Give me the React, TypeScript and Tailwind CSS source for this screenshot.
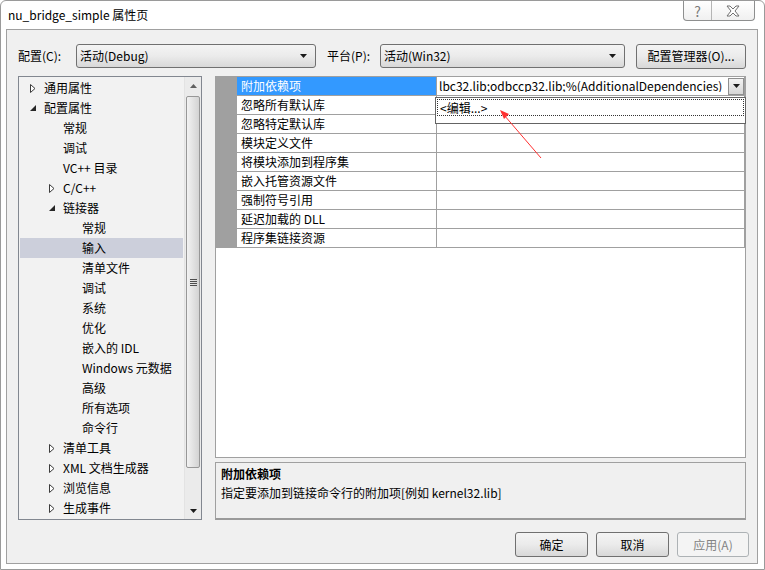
const tree = [
  { t: '通用属性', l: 0, a: 'c' },
  { t: '配置属性', l: 0, a: 'e' },
  { t: '常规', l: 1 },
  { t: '调试', l: 1 },
  { t: 'VC++ 目录', l: 1 },
  { t: 'C/C++', l: 1, a: 'c' },
  { t: '链接器', l: 1, a: 'e' },
  { t: '常规', l: 2 },
  { t: '输入', l: 2, sel: true },
  { t: '清单文件', l: 2 },
  { t: '调试', l: 2 },
  { t: '系统', l: 2 },
  { t: '优化', l: 2 },
  { t: '嵌入的 IDL', l: 2 },
  { t: 'Windows 元数据', l: 2 },
  { t: '高级', l: 2 },
  { t: '所有选项', l: 2 },
  { t: '命令行', l: 2 },
  { t: '清单工具', l: 1, a: 'c' },
  { t: 'XML 文档生成器', l: 1, a: 'c' },
  { t: '浏览信息', l: 1, a: 'c' },
  { t: '生成事件', l: 1, a: 'c' },
];

const pad = ['pl-[10px]', 'pl-[29px]', 'pl-[48px]'];

const props = [
  '附加依赖项',
  '忽略所有默认库',
  '忽略特定默认库',
  '模块定义文件',
  '将模块添加到程序集',
  '嵌入托管资源文件',
  '强制符号引用',
  '延迟加载的 DLL',
  '程序集链接资源',
];

function DownTri({ className = '' }: { className?: string }) {
  return (
    <svg width="7" height="4" viewBox="0 0 7 4" className={className}>
      <path d="M0 0 H7 L3.5 4 Z" fill="#1a1a1a" />
    </svg>
  );
}

function Arrow({ kind }: { kind?: string }) {
  if (kind === 'c')
    return (
      <svg width="6" height="9" viewBox="0 0 6 9">
        <path d="M0.5 0.5 L5 4.5 L0.5 8.5 Z" fill="#fff" stroke="#3c3c3c" strokeWidth="1" />
      </svg>
    );
  if (kind === 'e')
    return (
      <svg width="6" height="6" viewBox="0 0 6 6">
        <path d="M6 0 V6 H0 Z" fill="#262626" />
      </svg>
    );
  return null;
}

function Combo({ text, w }: { text: string; w: string }) {
  return (
    <div className={`${w} shrink-0 h-[24px] flex items-center justify-between pl-[3px] pr-[8px] border border-[#707070] rounded-[3px] bg-linear-to-b from-[#f4f4f4] via-[#ebebeb] to-[#d8d8d8]`}>
      <span>{text}</span>
      <DownTri />
    </div>
  );
}

function Btn({ label, w, disabled }: { label: string; w: string; disabled?: boolean }) {
  return (
    <div
      className={`${w} shrink-0 h-[25px] flex items-center justify-center rounded-[3px] border ${
        disabled
          ? 'border-[#adb2b5] bg-[#f4f4f4] text-[#838383]'
          : 'border-[#707070] bg-linear-to-b from-[#f4f4f4] via-[#ebebeb] to-[#d8d8d8]'
      }`}
    >
      {label}
    </div>
  );
}

function TreeScroll() {
  return (
    <div className="w-[17px] shrink-0 h-full flex flex-col bg-[#ebebeb] border-l border-[#e3e3e3]">
      <div className="h-[17px] flex items-center justify-center">
        <svg width="7" height="4" viewBox="0 0 7 4">
          <path d="M0 4 H7 L3.5 0 Z" fill="#606060" />
        </svg>
      </div>
      <div className="mx-[1px] mt-[2px] h-[372px] border border-[#979797] rounded-[2px] bg-linear-to-r from-[#f2f2f2] to-[#d3d3d3] flex flex-col items-center justify-center gap-[1px]">
        <div className="w-[7px] h-[1px] bg-[#4d4d4d]" />
        <div className="w-[7px] h-[1px] bg-[#4d4d4d]" />
        <div className="w-[7px] h-[1px] bg-[#4d4d4d]" />
        <div className="w-[7px] h-[1px] bg-[#4d4d4d]" />
      </div>
      <div className="flex-1" />
      <div className="h-[17px] flex items-center justify-center">
        <DownTri />
      </div>
    </div>
  );
}

export default function App() {
  return (
    <div className="w-[765px] h-[570px] bg-white border border-[#9a9a9a] rounded-t-[6px] relative overflow-hidden font-['Noto_Sans_CJK_SC',sans-serif] text-[12px] text-black leading-none">
      {/* title bar */}
      <div className="h-[28px] flex items-start justify-between">
        <div className="pl-[7px] pt-[8px] text-[12px]">nu_bridge_simple 属性页</div>
        <div className="mr-[9px] flex h-[20px] border border-t-0 border-[#8e8f8f] rounded-b-[4px] bg-linear-to-b from-[#ffffff] to-[#f0f0f0]">
          <div className="w-[28px] flex items-center justify-center border-r border-[#b5b5b5] text-[14px] text-[#7a7a7a]">?</div>
          <div className="w-[42px] flex items-center justify-center">
            <svg width="14" height="12" viewBox="0 0 14 12">
              <path
                d="M1 1 H4 L7 4 L10 1 H13 L9 6 L13 11 H10 L7 8 L4 11 H1 L5 6 Z"
                fill="#fff"
                stroke="#707070"
                strokeWidth="1"
              />
            </svg>
          </div>
        </div>
      </div>

      {/* client area */}
      <div className="ml-[5px] w-[752px] h-[535px] border border-[#a0a0a0] bg-[#f0f0f0] pt-[14px] pl-[11px] pr-[10px] flex flex-col">
        <div className="h-[24px] flex items-center whitespace-nowrap">
          <span className="w-[58px] shrink-0">配置(C):</span>
          <Combo text="活动(Debug)" w="w-[240px]" />
          <span className="ml-[11px] w-[53px] shrink-0">平台(P):</span>
          <Combo text="活动(Win32)" w="w-[245px]" />
          <div className="ml-[11px]">
            <Btn label="配置管理器(O)..." w="w-[110px]" />
          </div>
        </div>

        <div className="mt-[8px] h-[444px] flex">
          {/* tree */}
          <div className="w-[184px] shrink-0 h-full border border-[#828790] bg-[#f2f2f2] flex">
            <div className="flex-1 min-w-0 pt-[1px] whitespace-nowrap">
              {tree.map((n, i) => (
                <div
                  key={i}
                  className={`h-[20px] mx-[1px] flex items-center ${pad[n.l]} ${n.sel ? 'bg-[#cccfdb]' : ''}`}
                >
                  <span className="w-[14px] shrink-0 flex items-center">
                    <Arrow kind={n.a} />
                  </span>
                  <span>{n.t}</span>
                </div>
              ))}
            </div>
            <TreeScroll />
          </div>

          {/* right side */}
          <div className="ml-[13px] w-[531px] shrink-0 flex flex-col">
            <div className="h-[382px] border border-[#a0a0a0] bg-white relative">
              {props.map((p, i) => (
                <div key={i} className="h-[19px] flex">
                  <div className="w-[21px] shrink-0 bg-[#a0a0a0]" />
                  <div
                    className={`w-[200px] shrink-0 flex items-center pl-[4px] whitespace-nowrap border-b border-r border-[#a0a0a0] ${
                      i === 0 ? 'bg-[#3399ff] text-white' : ''
                    }`}
                  >
                    {p}
                  </div>
                  <div className="flex-1 min-w-0 border-b border-r border-[#a0a0a0] flex items-center overflow-hidden">
                    {i === 0 && (
                      <>
                        <div className="flex-1 min-w-0 overflow-hidden whitespace-nowrap pl-[2px]">
                          lbc32.lib;odbccp32.lib;%(AdditionalDependencies)
                        </div>
                        <div className="w-[16px] shrink-0 h-[17px] border border-[#8f8f8f] bg-linear-to-b from-[#f2f2f2] to-[#d6d6d6] flex items-center justify-center">
                          <DownTri />
                        </div>
                      </>
                    )}
                  </div>
                </div>
              ))}

              {/* dropdown list */}
              <div className="absolute left-[219px] top-[20px] w-[311px] h-[27px] bg-white border border-[#646464] p-[1px]">
                <div className="h-[17px] flex items-center pl-[2px] border border-dotted border-[#333]">
                  &lt;编辑...&gt;
                </div>
              </div>
            </div>

            <div className="mt-[4px] flex-1 border border-[#a0a0a0] border-b-2 border-b-[#9a9a9a] bg-[#f0f0f0] pl-[5px] pt-[5px]">
              <div className="font-bold">附加依赖项</div>
              <div className="mt-[7px]">指定要添加到链接命令行的附加项[例如 kernel32.lib]</div>
            </div>
          </div>
        </div>

        <div className="mt-[12px] flex justify-end gap-[8px] -mr-[2px]">
          <Btn label="确定" w="w-[73px]" />
          <Btn label="取消" w="w-[73px]" />
          <Btn label="应用(A)" w="w-[72px]" disabled />
        </div>
      </div>

      {/* red annotation arrow */}
      <svg className="absolute left-0 top-0 pointer-events-none" width="765" height="570">
        <line x1="540" y1="157" x2="503" y2="114" stroke="#ff3030" strokeWidth="1" />
        <path d="M499 109 L508 113 L503 118 Z" fill="#ff3030" />
      </svg>
    </div>
  );
}
